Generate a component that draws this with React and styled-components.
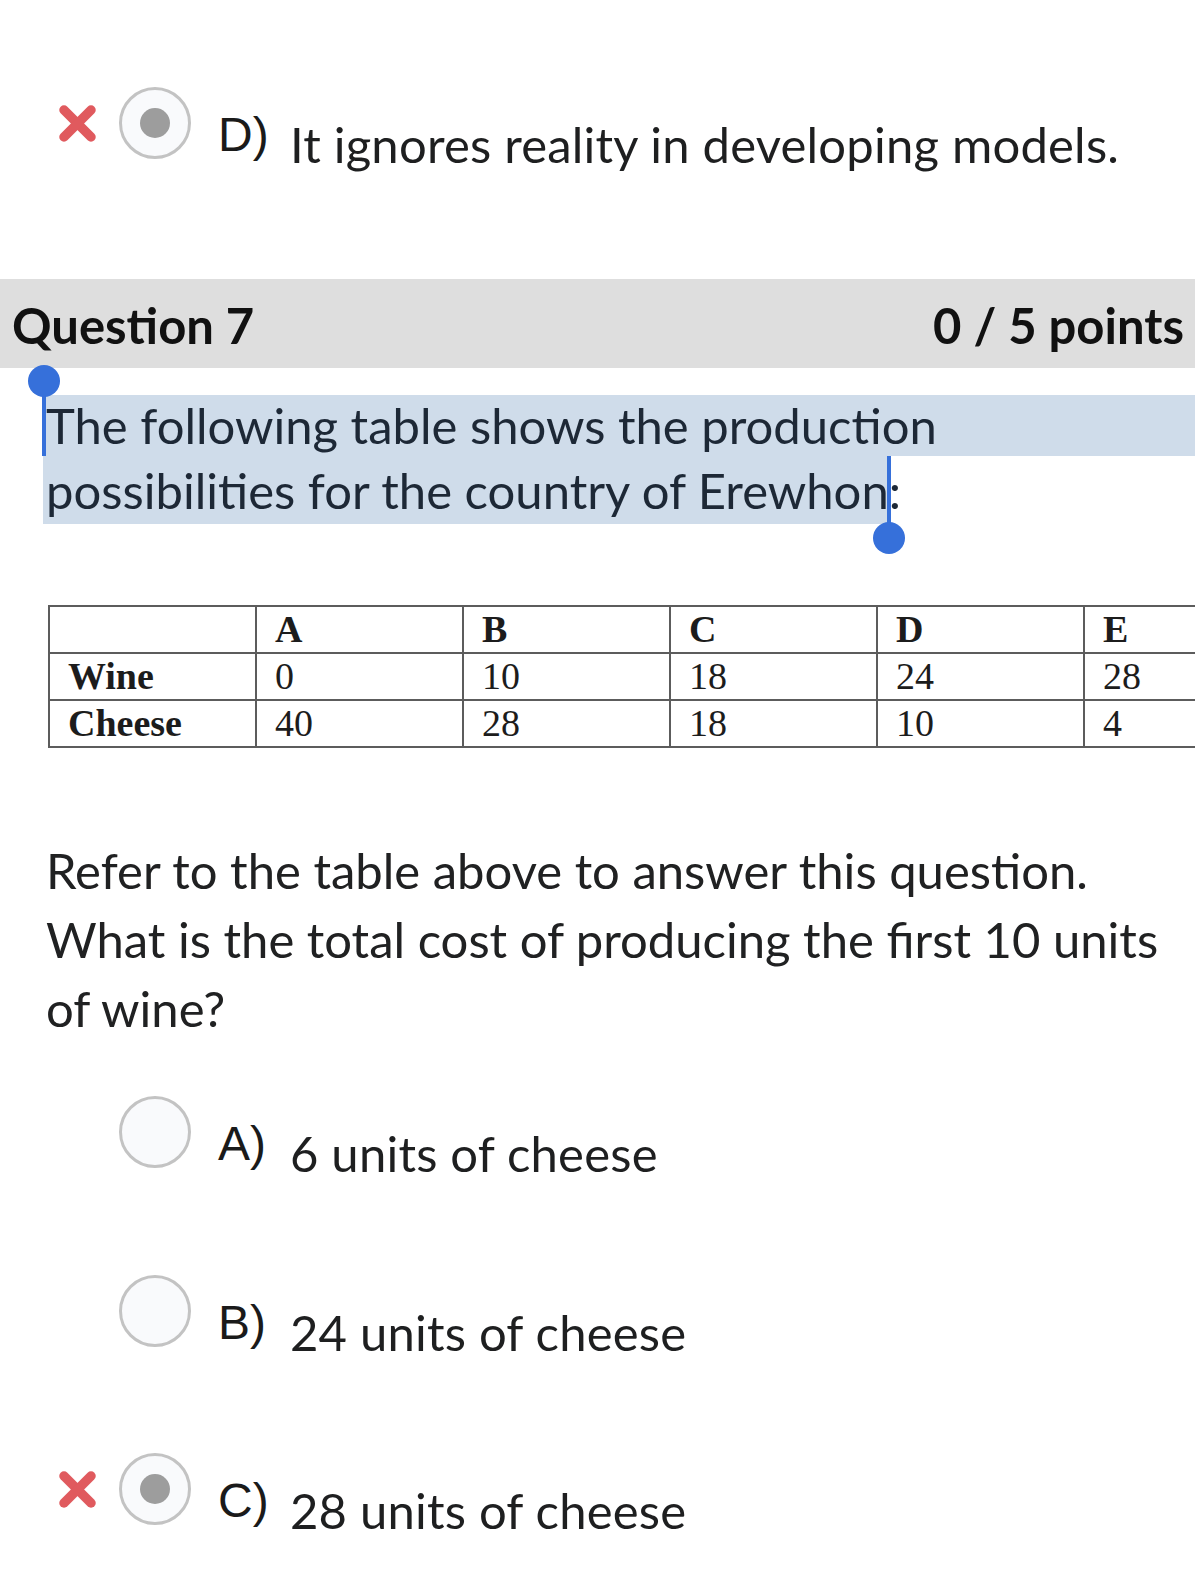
import React from "react";
import styled, { createGlobalStyle } from "styled-components";

const GlobalStyle = createGlobalStyle`
  html, body {
    margin: 0;
    padding: 0;
    background: #ffffff;
    overflow-x: hidden;
  }
  body {
    font-family: Lato, "Open Sans", sans-serif;
    color: #202122;
  }
`;

const Page = styled.div`
  width: 1195px;
  overflow: hidden;
  padding-bottom: 40px;
`;

const OptionRow = styled.div`
  display: flex;
  align-items: flex-start;
  padding-left: 58px;
  margin-top: ${p => p.$top}px;
`;

const Controls = styled.div`
  display: flex;
  align-items: center;
  gap: 22px;
  height: 72px;
`;

const MarkSlot = styled.div`
  width: 39px;
  height: 39px;
  display: flex;
  align-items: center;
  justify-content: center;
`;

const Radio = styled.div`
  box-sizing: border-box;
  width: 72px;
  height: 72px;
  border-radius: 50%;
  border: 3px solid #c3c3c3;
  background: #f9fafc;
  display: flex;
  align-items: center;
  justify-content: center;
`;

const RadioDot = styled.div`
  width: 30px;
  height: 30px;
  border-radius: 50%;
  background: #9d9d9d;
`;

const Letter = styled.div`
  margin-left: 27px;
  margin-top: 24px;
  width: 72px;
  font-family: "Liberation Sans", Arial, sans-serif;
  font-size: 48px;
  line-height: 48px;
  color: #1a1a1a;
`;

const AnswerText = styled.div`
  margin-top: 28px;
  font-size: 49px;
  letter-spacing: 0.2px;
  line-height: 1.2;
  color: #1e1f20;
  white-space: nowrap;
`;

const Header = styled.div`
  margin-top: 105px;
  height: 89px;
  box-sizing: border-box;
  background: #dedede;
  display: flex;
  justify-content: space-between;
  align-items: flex-start;
  padding: 17px 11px 0 12px;
  font-size: 49px;
  font-weight: 700;
  line-height: 1.2;
  color: #111111;
`;

const Selection = styled.div`
  position: relative;
  margin-top: 27px;
  margin-left: 43px;
  font-size: 49px;
  color: #1d2836;
`;

const SelLine = styled.div`
  height: ${p => p.$h}px;
  line-height: ${p => p.$h}px;
  padding-left: 3px;
  white-space: nowrap;
  background: ${p => (p.$full ? "#cfdcea" : "transparent")};
`;

const Marked = styled.span`
  background: #cfdcea;
  display: inline-block;
  height: 100%;
  margin-left: -3px;
  padding-left: 3px;
`;

const EndHandle = styled.span`
  position: relative;
  display: inline-block;
  width: 0;
  height: 100%;
  vertical-align: top;
`;

const Caret = styled.span`
  position: absolute;
  width: 4px;
  background: #3670da;
  left: ${p => p.$x}px;
  top: ${p => p.$y}px;
  height: ${p => p.$h}px;
`;

const Knob = styled.span`
  position: absolute;
  width: 32px;
  height: 32px;
  border-radius: 50%;
  background: #3670da;
  left: ${p => p.$x}px;
  top: ${p => p.$y}px;
`;

const TableWrap = styled.div`
  margin-top: 81px;
  margin-left: 48px;
`;

const Grid = styled.table`
  border-collapse: collapse;
  font-family: "Liberation Serif", "Times New Roman", serif;
  font-size: 38px;
  color: #1c1c1c;
`;

const Cell = styled.td`
  border: 2px solid #5c5c5c;
  width: 169px;
  min-width: 169px;
  height: 45px;
  padding: 0 18px;
  line-height: 45px;
  font-weight: ${p => (p.$bold ? 700 : 400)};
  vertical-align: top;
  white-space: nowrap;
`;

const Prompt = styled.p`
  margin: 88px 0 0 46px;
  width: 1130px;
  font-size: 49px;
  line-height: 69px;
  color: #202122;
`;

const CrossMark = () => (
  <svg width="39" height="39" viewBox="0 0 39 39">
    <g stroke="#e05a5e" strokeWidth="9.5" strokeLinecap="round">
      <line x1="6" y1="6" x2="33" y2="33" />
      <line x1="33" y1="6" x2="6" y2="33" />
    </g>
  </svg>
);

const Option = ({ top, wrong, selected, letter, children }) => (
  <OptionRow $top={top}>
    <Controls>
      <MarkSlot>{wrong && <CrossMark />}</MarkSlot>
      <Radio>{selected && <RadioDot />}</Radio>
    </Controls>
    <Letter>{letter}</Letter>
    <AnswerText>{children}</AnswerText>
  </OptionRow>
);

const columns = ["A", "B", "C", "D", "E"];
const rows = [
  { label: "Wine", values: [0, 10, 18, 24, 28] },
  { label: "Cheese", values: [40, 28, 18, 10, 4] }
];

export default function App() {
  return (
    <Page>
      <GlobalStyle />
      <Option top={87} wrong selected letter="D)">
        It ignores reality in developing models.
      </Option>

      <Header>
        <span>Question 7</span>
        <span>0 / 5 points</span>
      </Header>

      <Selection>
        <SelLine $h={61} $full>
          The following table shows the production
        </SelLine>
        <SelLine $h={68}>
          <Marked>possibilities for the country of Erewhon</Marked>
          <EndHandle>
            <Caret $x={-2} $y={0} $h={70} />
            <Knob $x={-16} $y={66} />
          </EndHandle>
          :
        </SelLine>
        <Caret $x={-1} $y={-15} $h={76} />
        <Knob $x={-15} $y={-30} />
      </Selection>

      <TableWrap>
        <Grid>
          <tbody>
            <tr>
              <Cell />
              {columns.map(c => (
                <Cell key={c} $bold>
                  {c}
                </Cell>
              ))}
            </tr>
            {rows.map(r => (
              <tr key={r.label}>
                <Cell $bold>{r.label}</Cell>
                {r.values.map((v, i) => (
                  <Cell key={i}>{v}</Cell>
                ))}
              </tr>
            ))}
          </tbody>
        </Grid>
      </TableWrap>

      <Prompt>
        Refer to the table above to answer this question.
        <br />
        What is the total cost of producing the first 10 units of wine?
      </Prompt>

      <Option top={53} letter="A)">
        6 units of cheese
      </Option>
      <Option top={92} letter="B)">
        24 units of cheese
      </Option>
      <Option top={92} wrong selected letter="C)">
        28 units of cheese
      </Option>
    </Page>
  );
}
